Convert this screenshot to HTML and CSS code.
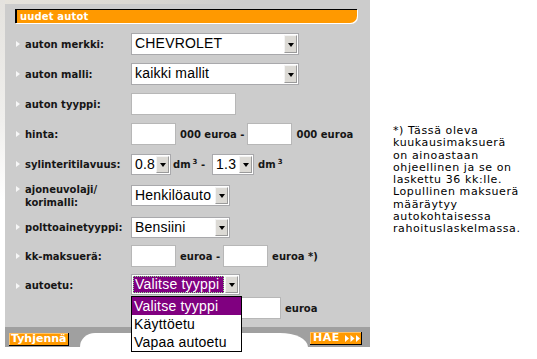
FILE: index.html
```html
<!DOCTYPE html>
<html lang="fi">
<head>
<meta charset="utf-8">
<title>uudet autot</title>
<link rel="stylesheet" href="styles.css">
</head>
<body>
<div class="page">
  <div class="panel">
    <div class="header"><span class="header-title">uudet autot</span></div>
    <div class="form">
      <div class="row">
        <div class="label"><i class="arrow"></i><span>auton merkki:</span></div>
        <div class="field">
          <div class="select w-long"><span class="value">CHEVROLET</span><span class="btn"><i class="tri"></i></span></div>
        </div>
      </div>
      <div class="row">
        <div class="label"><i class="arrow"></i><span>auton malli:</span></div>
        <div class="field">
          <div class="select w-long"><span class="value">kaikki mallit</span><span class="btn"><i class="tri"></i></span></div>
        </div>
      </div>
      <div class="row">
        <div class="label"><i class="arrow"></i><span>auton tyyppi:</span></div>
        <div class="field">
          <input class="text w-type" type="text">
        </div>
      </div>
      <div class="row">
        <div class="label"><i class="arrow"></i><span>hinta:</span></div>
        <div class="field">
          <input class="text w-small" type="text">
          <span class="unit u-price1">000 euroa -</span>
          <input class="text w-small" type="text">
          <span class="unit u-after">000 euroa</span>
        </div>
      </div>
      <div class="row">
        <div class="label"><i class="arrow"></i><span>sylinteritilavuus:</span></div>
        <div class="field">
          <div class="select w-cc1"><span class="value">0.8</span><span class="btn"><i class="tri"></i></span></div>
          <span class="unit u-cc">dm<sup>3</sup> -</span>
          <div class="select w-cc2"><span class="value">1.3</span><span class="btn"><i class="tri"></i></span></div>
          <span class="unit u-after">dm<sup>3</sup></span>
        </div>
      </div>
      <div class="row row-tall">
        <div class="label label-multi"><i class="arrow"></i><span>ajoneuvolaji/<br>korimalli:</span></div>
        <div class="field">
          <div class="select w-mid"><span class="value">Henkilöauto</span><span class="btn"><i class="tri"></i></span></div>
        </div>
      </div>
      <div class="row">
        <div class="label"><i class="arrow"></i><span>polttoainetyyppi:</span></div>
        <div class="field">
          <div class="select w-mid"><span class="value">Bensiini</span><span class="btn"><i class="tri"></i></span></div>
        </div>
      </div>
      <div class="row row-short">
        <div class="label"><i class="arrow"></i><span>kk-maksuerä:</span></div>
        <div class="field">
          <input class="text w-small" type="text">
          <span class="unit u-kk">euroa -</span>
          <input class="text w-small" type="text">
          <span class="unit u-after">euroa *)</span>
        </div>
      </div>
      <div class="row row-top">
        <div class="label"><i class="arrow"></i><span>autoetu:</span></div>
        <div class="field">
          <div class="combo">
            <div class="select w-benefit is-focus"><span class="value">Valitse tyyppi</span><span class="btn"><i class="tri"></i></span></div>
            <div class="dropdown">
              <div class="opt is-selected">Valitse tyyppi</div>
              <div class="opt">Käyttöetu</div>
              <div class="opt">Vapaa autoetu</div>
            </div>
          </div>
        </div>
      </div>
      <div class="row row-amount">
        <div class="label"></div>
        <div class="field">
          <input class="text w-small amount" type="text">
          <span class="unit u-after">euroa</span>
        </div>
      </div>
    </div>
    <div class="footer">
      <div class="foot-left"><span class="obtn">Tyhjennä</span></div>
      <div class="foot-mid"><div class="tab"></div></div>
      <div class="foot-right">
        <span class="obtn obtn-go">HAE
          <svg class="go-arrows" width="15" height="7" viewBox="0 0 15 7"><path d="M0 0L4 3.5L0 7Z M5.5 0L9.5 3.5L5.5 7Z M11 0L15 3.5L11 7Z" fill="#fff"/></svg>
        </span>
      </div>
    </div>
  </div>
  <div class="note">
    *) Tässä oleva<br>
    kuukausimaksuerä<br>
    on ainoastaan<br>
    ohjeellinen ja se on<br>
    laskettu 36 kk:lle.<br>
    Lopullinen maksuerä<br>
    määräytyy<br>
    autokohtaisessa<br>
    rahoituslaskelmassa.
  </div>
</div>
</body>
</html>
```

FILE: styles.css
```css
html, body {
  margin: 0;
  padding: 0;
  background: #fff;
}

body {
  width: 537px;
  height: 359px;
  overflow: hidden;
  font-family: "DejaVu Sans", Verdana, sans-serif;
  background: linear-gradient(to bottom, #e4e2de 0, #f0efed 120px, #fff 200px) left top / 5px 100% no-repeat, #fff;
}

.page {
  display: flex;
  align-items: flex-start;
}

/* ---------- panel ---------- */
.panel {
  width: 365px;
  margin-left: 5px;
  padding-top: 9px;
  background:
    linear-gradient(to right, #e6e3dc 0, #dcd9d3 120px, #cccccc 240px) left top / 100% 4px no-repeat,
    #cccccc;
}

.header {
  margin: 0 13px 0 10px;
  height: 13px;
  border-top: 1px solid #000;
  border-left: 2px solid #000;
  background: #ff9900;
  border-bottom-right-radius: 7px;
  box-shadow: 1px 1px 0 #fff;
  padding-left: 3px;
}

.header-title {
  color: #fff;
  font-weight: bold;
  font-size: 10px;
  letter-spacing: 0.15px;
  line-height: 13px;
  display: block;
}

/* ---------- form ---------- */
.form {
  margin-top: 6px;
  padding-left: 11px;
}

.row {
  display: flex;
  align-items: center;
  height: 30px;
}

.row-tall { height: 33px; }
.row-short { height: 28px; }

.row-top {
  height: 27px;
  align-items: flex-start;
  padding-top: 4px;
  box-sizing: border-box;
}
.row-top .label { padding-top: 5px; }

.row-amount {
  height: 22px;
  align-items: flex-start;
}

.label {
  width: 115px;
  flex: none;
  display: flex;
  align-items: center;
  font-size: 10px;
  font-weight: bold;
  color: #161616;
  line-height: 13px;
  white-space: nowrap;
}

.label-multi { align-items: flex-start; }
.label-multi .arrow { margin-top: 3px; }

.arrow {
  flex: none;
  width: 0;
  height: 0;
  border-left: 4px solid #f7f7f7;
  border-top: 3.5px solid transparent;
  border-bottom: 3.5px solid transparent;
  margin-right: 5px;
}

.field {
  display: flex;
  align-items: center;
}

.unit {
  font-size: 10px;
  font-weight: bold;
  color: #161616;
  white-space: nowrap;
}

.unit sup {
  font-size: 7px;
  vertical-align: 4px;
  line-height: 0;
  margin-left: 2px;
}

.u-price1 { margin: 0 3px 0 4px; }
.u-kk { margin: 0 3px 0 4px; }
.u-cc { margin: 0 7px 0 2px; }
.u-after { margin-left: 4px; }

/* text inputs */
.text {
  box-sizing: border-box;
  height: 22px;
  border: 1px solid #b7b7b7;
  background: #fff;
  margin: 0;
  padding: 0;
  outline: none;
}

.w-type { width: 105px; }
.w-small { width: 45px; }
.amount { margin-left: 105px; }

/* selects */
.select {
  box-sizing: border-box;
  height: 21px;
  display: flex;
  border: 1px solid #a9a9ac;
  background: #fff;
  font-family: "Liberation Sans", Arial, sans-serif;
  font-size: 14px;
  letter-spacing: 0.2px;
  color: #000;
}

.w-long { width: 168px; height: 22px; }
.w-cc1 { width: 40px; }
.w-cc2 { width: 42px; }
.w-mid { width: 99px; }
.w-benefit { width: 109px; }

.value {
  flex: 1;
  padding-left: 3px;
  line-height: 19px;
  white-space: nowrap;
  overflow: hidden;
}

.btn {
  flex: none;
  box-sizing: border-box;
  width: 13px;
  margin: 1px 1px 1px 0;
  background: #dcdad5;
  border: 1px solid;
  border-color: #f4f4f4 #9a9a9a #9a9a9a #f4f4f4;
  display: flex;
  align-items: center;
  justify-content: center;
}

.tri {
  width: 0;
  height: 0;
  border-top: 4px solid #000;
  border-left: 3.5px solid transparent;
  border-right: 3.5px solid transparent;
  margin-top: 1px;
}

.is-focus .value {
  background: #800080;
  color: #fff;
  margin: 1px 1px 1px 1px;
  padding-left: 2px;
  line-height: 17px;
  outline: 1px dotted #8ee88e;
  outline-offset: -1px;
}

/* open dropdown */
.combo {
  position: relative;
}

.dropdown {
  position: absolute;
  left: 0;
  top: 22px;
  width: 111px;
  box-sizing: border-box;
  border: 1px solid #000;
  background: #fff;
  z-index: 5;
  font-family: "Liberation Sans", Arial, sans-serif;
  font-size: 14px;
  letter-spacing: 0.2px;
}

.opt {
  height: 18px;
  line-height: 18px;
  padding-left: 2px;
  white-space: nowrap;
  overflow: hidden;
}

.opt.is-selected {
  background: #800080;
  color: #fff;
}

/* ---------- footer ---------- */
.footer {
  margin-top: 8px;
  height: 20px;
  display: flex;
  background: #a0a0a0;
}

.foot-left {
  width: 75px;
  flex: none;
  box-sizing: border-box;
  padding: 6px 0 0 4px;
  display: flex;
  align-items: flex-start;
}

.foot-mid {
  flex: 1;
  padding-top: 6px;
  display: flex;
}

.tab {
  flex: 1;
  background: #fff;
  border-radius: 15px 28px 0 0 / 14px 14px 0 0;
}

.foot-right {
  width: 62px;
  flex: none;
  box-sizing: border-box;
  padding: 5px 0 0 2px;
  display: flex;
  align-items: flex-start;
}

.obtn {
  display: flex;
  align-items: center;
  height: 12px;
  background: #ff9900;
  color: #fff;
  font-weight: bold;
  font-size: 11px;
  line-height: 12px;
  padding: 0 1px 0 2px;
  border-right: 1px solid #000;
  border-bottom: 1px solid #000;
  box-shadow: inset 1px 1px 0 #ffc266;
  white-space: nowrap;
}

.obtn-go {
  width: 52px;
  box-sizing: border-box;
  padding-left: 3px;
  height: 13px;
  letter-spacing: 0.5px;
}

.go-arrows {
  margin-left: 5px;
}

/* ---------- note ---------- */
.note {
  margin: 125px 0 0 23px;
  font-family: "DejaVu Sans", Verdana, sans-serif;
  font-size: 11px;
  line-height: 12.3px;
  letter-spacing: 0.6px;
  color: #000;
  white-space: nowrap;
}
```
